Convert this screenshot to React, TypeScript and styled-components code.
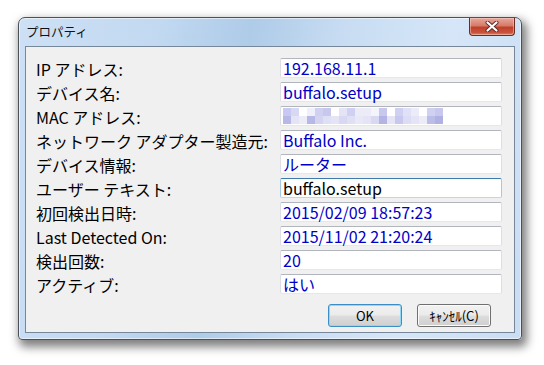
import React from 'react';
import styled, {createGlobalStyle} from 'styled-components';

const GlobalStyle = createGlobalStyle`
    html, body {
        margin: 0;
        background: #ffffff;
    }
    body {
        font-family: 'Noto Sans CJK JP', 'Liberation Sans', sans-serif;
    }
`;

const Desktop = styled.div`
    padding: 17px 0 0 18px;
    height: 365px;
    box-sizing: border-box;
`;

const Window = styled.div`
    width: 504px;
    height: 323px;
    box-sizing: border-box;
    display: flex;
    flex-direction: column;
    border: 1px solid #4c5158;
    border-radius: 7px 7px 4px 4px;
    background: linear-gradient(
        100deg,
        #cde0f5 0%,
        #c2d9f1 25%,
        #aecbe8 42%,
        #c7dcf2 58%,
        #d6e6f8 78%,
        #c9ddf3 100%
    );
    box-shadow: inset 0 0 0 1px rgba(255, 255, 255, 0.55), 3px 5px 10px 2px rgba(0, 0, 0, 0.5);
`;

const TitleBar = styled.div`
    height: 28px;
    display: flex;
    justify-content: space-between;
    align-items: flex-start;
`;

const Title = styled.div`
    padding: 5px 0 0 7px;
    font-size: 12.5px;
    line-height: 18px;
    color: #111;
`;

const CloseButton = styled.div`
    width: 46px;
    height: 18px;
    margin-right: 6px;
    box-sizing: border-box;
    display: flex;
    align-items: center;
    justify-content: center;
    border: 1px solid #6e2a22;
    border-top: none;
    border-radius: 0 0 4px 4px;
    background: linear-gradient(#e7a89c 0%, #d77a6a 45%, #c0402c 55%, #c8523c 85%, #db8466 100%);
    box-shadow: inset 0 0 0 1px rgba(255, 220, 210, 0.45);
`;

const Client = styled.div`
    height: 287px;
    margin: 0 6px 6px 6px;
    box-sizing: border-box;
    border: 1px solid #76879a;
    background: #f0f0f0;
    padding: 11px 12px 5px 10px;
    display: flex;
    flex-direction: column;
`;

const PropertyGrid = styled.div`
    display: grid;
    grid-template-columns: 244px 222px;
    grid-auto-rows: 20px;
    row-gap: 4px;
    align-items: center;
`;

const Label = styled.div`
    height: 20px;
    display: flex;
    align-items: center;
    padding-top: 2px;
    box-sizing: border-box;
    font-size: 16px;
    line-height: 18px;
    color: #000;
    white-space: nowrap;
`;

const Field = styled.div<{$focused?: boolean; $editable?: boolean}>`
    height: 20px;
    box-sizing: border-box;
    padding: 0 2px;
    display: flex;
    align-items: center;
    background: #ffffff;
    border: 1px solid;
    border-radius: 2px;
    border-color: ${(p) => (p.$focused ? '#3d7bad #a4c9e3 #b7d9ed #a4c9e3' : '#b2b5bb #dcdee3 #e4e7ec #dcdee3')};
    color: ${(p) => (p.$editable ? '#000000' : '#0000c8')};
    font-size: 16px;
    line-height: 18px;
    white-space: nowrap;
`;

const ButtonRow = styled.div`
    display: flex;
    justify-content: flex-end;
    gap: 15px;
    margin: 10px 11px 0 0;
`;

const Button = styled.div<{$default?: boolean}>`
    width: 74px;
    height: 23px;
    box-sizing: border-box;
    display: flex;
    align-items: center;
    justify-content: center;
    border: 1px solid ${(p) => (p.$default ? '#3c8fc6' : '#707070')};
    border-radius: 3px;
    background: linear-gradient(#f2f2f2 0%, #ebebeb 48%, #dddddd 52%, #cfcfcf 100%);
    box-shadow: inset 0 0 0 1px ${(p) => (p.$default ? '#8fd8f6' : '#fbfbfb')};
    font-size: 13px;
    line-height: 16px;
    color: #000;
`;

const MOSAIC = [
    ['c8c8f0', 'd8d8f4', 'ffffff', 'f0f0fa', 'd0d0f0', 'c8c8ee', 'ffffff', 'e4e4f6', 'd0d0f2', 'ececf8',
        'ececf8', 'f4f4fb', 'c8c8ee', 'ffffff', 'd0d0f2', 'e0e0f6', 'ececf8', 'ffffff', 'd0d0f0', 'c8c8ee'],
    ['b8b8e6', 'e4e4f6', 'ececf8', 'b8b8e6', 'd4d4f2', 'e0e0f4', 'e4e4f6', 'd8d8f2', 'e0e0f4', 'e8e8f6',
        'e4e4f6', 'd8d8f2', 'b4b4e4', 'e4e4f6', 'c8c8ee', 'dcdcf4', 'e4e4f6', 'ececf8', 'bcbce8', 'b0b0e2']
];

const Mosaic = () => (
    <svg width="160" height="16" viewBox="0 0 160 16" style={{display: 'block', marginTop: '-1px'}}>
        {MOSAIC.map((row, r) =>
            row.map((c, i) => <rect key={`${r}-${i}`} x={i * 8} y={r * 8} width="8" height="8" fill={`#${c}`} />)
        )}
    </svg>
);

const CloseGlyph = () => (
    <svg width="14" height="11" viewBox="0 0 14 11">
        <path d="M2.5 1.5 L11.5 9.5 M11.5 1.5 L2.5 9.5" stroke="#5a2a26" strokeWidth="4" strokeLinecap="round" />
        <path d="M2.5 1.5 L11.5 9.5 M11.5 1.5 L2.5 9.5" stroke="#ffffff" strokeWidth="2.2" strokeLinecap="round" />
    </svg>
);

type Row = {label: string; value?: string; editable?: boolean; focused?: boolean; masked?: boolean};

const ROWS: Row[] = [
    {label: 'IP アドレス:', value: '192.168.11.1'},
    {label: 'デバイス名:', value: 'buffalo.setup'},
    {label: 'MAC アドレス:', masked: true},
    {label: 'ネットワーク アダプター製造元:', value: 'Buffalo Inc.'},
    {label: 'デバイス情報:', value: 'ルーター'},
    {label: 'ユーザー テキスト:', value: 'buffalo.setup', editable: true, focused: true},
    {label: '初回検出日時:', value: '2015/02/09 18:57:23'},
    {label: 'Last Detected On:', value: '2015/11/02 21:20:24'},
    {label: '検出回数:', value: '20'},
    {label: 'アクティブ:', value: 'はい'}
];

const App = (): JSX.Element => {
    return (
        <Desktop>
            <GlobalStyle />
            <Window>
                <TitleBar>
                    <Title>プロパティ</Title>
                    <CloseButton>
                        <CloseGlyph />
                    </CloseButton>
                </TitleBar>
                <Client>
                    <PropertyGrid>
                        {ROWS.map((r, i) => (
                            <React.Fragment key={i}>
                                <Label>{r.label}</Label>
                                <Field $editable={r.editable} $focused={r.focused}>
                                    {r.masked ? <Mosaic /> : r.value}
                                </Field>
                            </React.Fragment>
                        ))}
                    </PropertyGrid>
                    <ButtonRow>
                        <Button $default>OK</Button>
                        <Button>ｷｬﾝｾﾙ(C)</Button>
                    </ButtonRow>
                </Client>
            </Window>
        </Desktop>
    );
};

export default App;
